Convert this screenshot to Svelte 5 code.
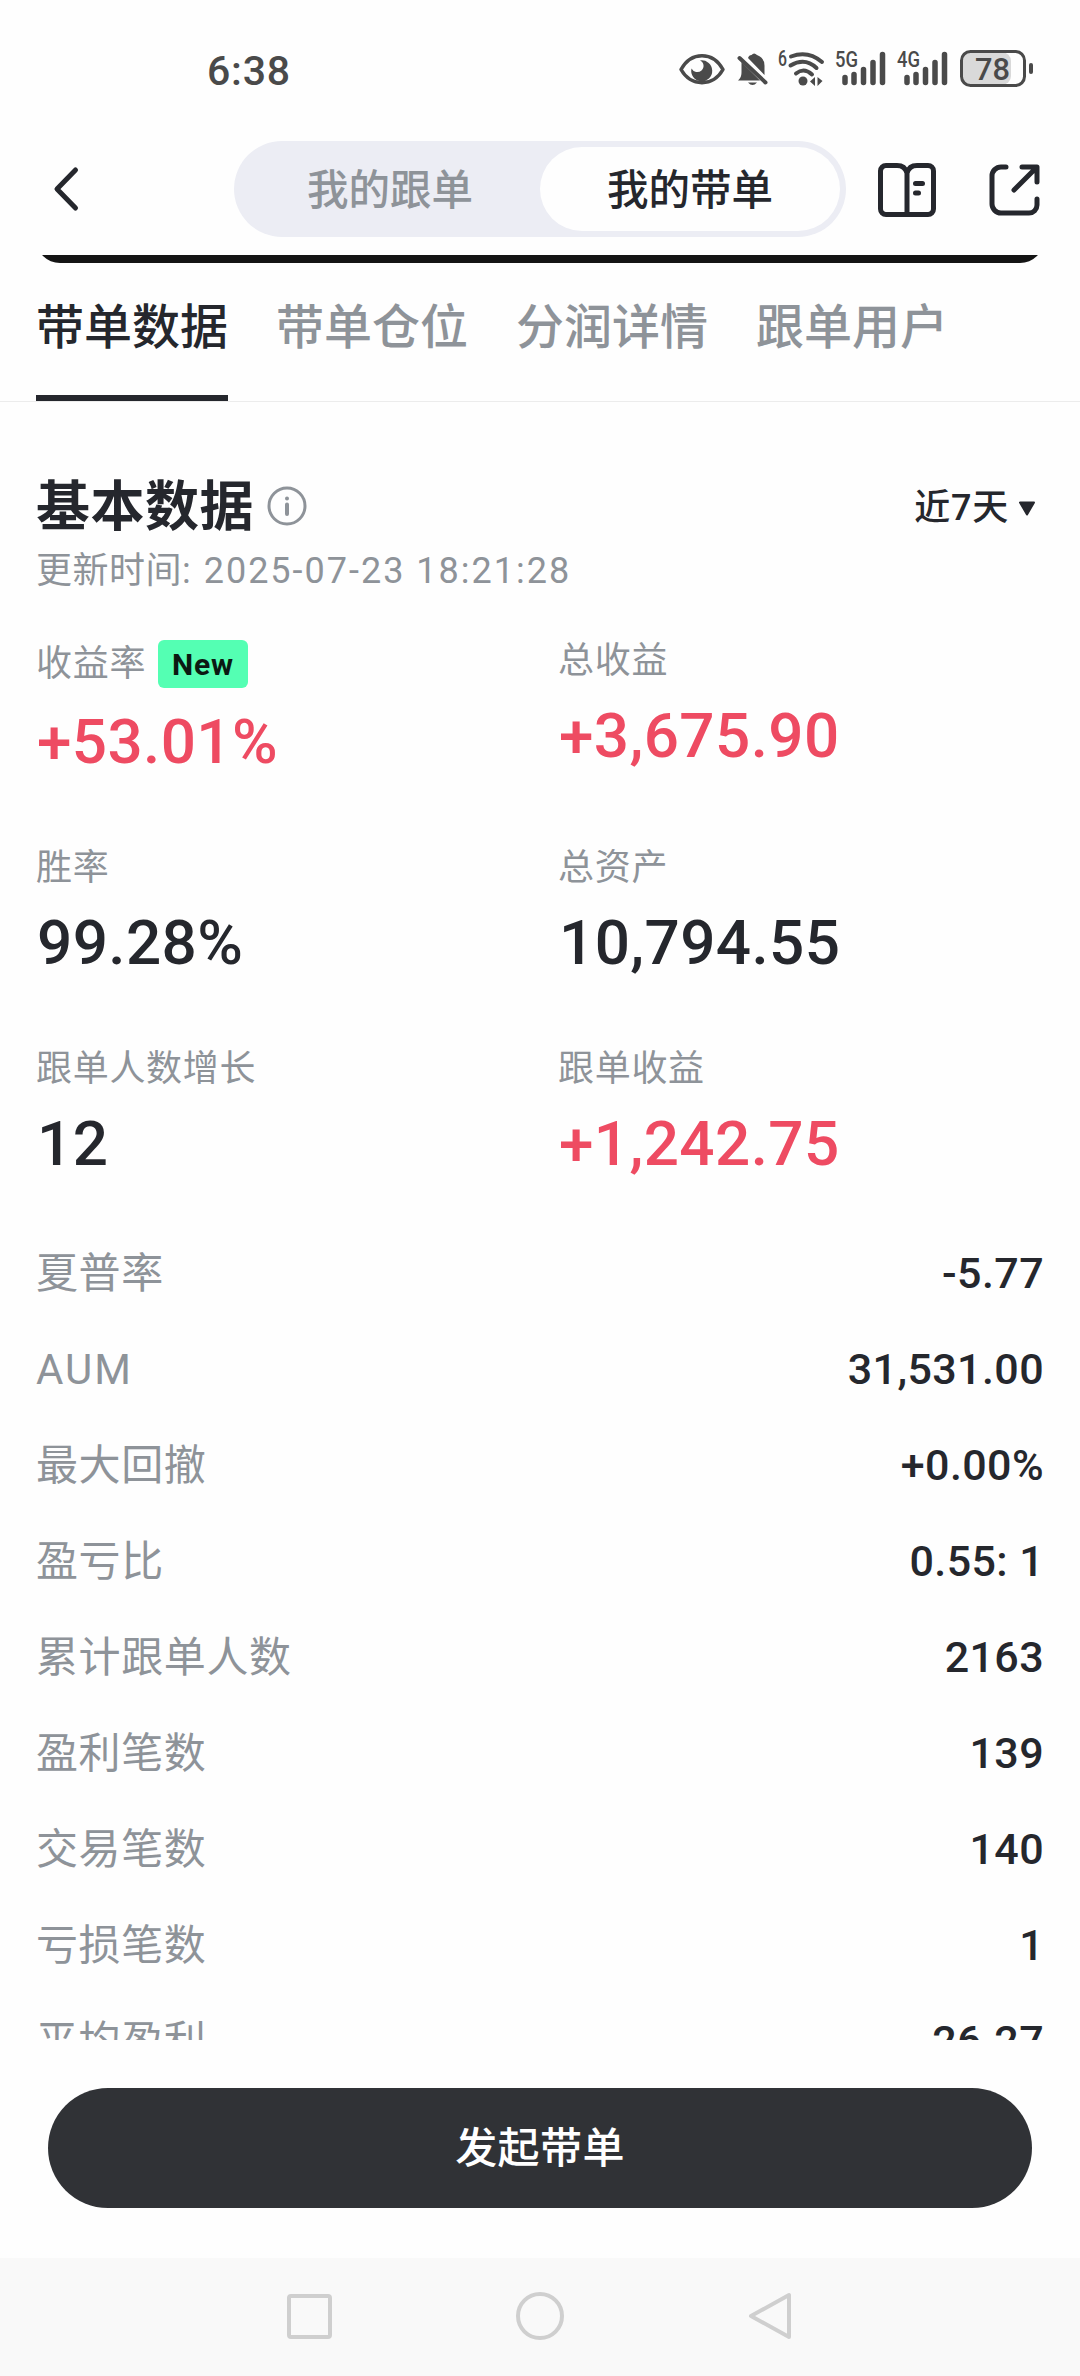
<script lang="ts">
  interface Metric {
    label: string;
    value: string;
    up?: boolean;
    badge?: string;
  }

  const modes = ["我的跟单", "我的带单"];
  const tabs = ["带单数据", "带单仓位", "分润详情", "跟单用户"];

  let mode = $state(1);
  let tab = $state(0);

  const metrics: Metric[] = [
    { label: "收益率", value: "+53.01%", up: true, badge: "New" },
    { label: "总收益", value: "+3,675.90", up: true },
    { label: "胜率", value: "99.28%" },
    { label: "总资产", value: "10,794.55" },
    { label: "跟单人数增长", value: "12" },
    { label: "跟单收益", value: "+1,242.75", up: true },
  ];

  const rows = [
    ["夏普率", "-5.77"],
    ["AUM", "31,531.00"],
    ["最大回撤", "+0.00%"],
    ["盈亏比", "0.55: 1"],
    ["累计跟单人数", "2163"],
    ["盈利笔数", "139"],
    ["交易笔数", "140"],
    ["亏损笔数", "1"],
    ["平均盈利", "26.27"],
  ];
</script>

{#snippet signal(label: string)}
  <svg class="signal" width="52" height="38" viewBox="0 0 52 38">
    <text x="0" y="17" textLength="23" lengthAdjust="spacingAndGlyphs">{label}</text>
    <path d="M10 27.500v5M19 24.500v8M28.500 19.500v13M38 12.500v20M47.500 4.500v28" />
  </svg>
{/snippet}

<div class="screen">
  <div class="status">
    <span class="time">6:38</span>
    <div class="status-icons">
      <svg width="46" height="38" viewBox="0 0 46 38">
        <path d="M2 19.500C12 1 34 1 44 19.500C34 37 12 37 2 19.500Z" fill="none" stroke="#4a4a4a" stroke-width="3.500" stroke-linejoin="round" />
        <path d="M21 10.500a10.500 10.500 0 1 1-8.500 8a6.500 6.500 0 0 0 10 2a6 6 0 0 0-1.500-10Z" fill="#4a4a4a" />
      </svg>
      <svg class="bell" width="32" height="38" viewBox="0 0 32 38">
        <path d="M4.500 12L23 30.500H1c3-3 3.500-5 3.500-9zM11 8q1-3 3.500-3q2.500-3 5.500 0q8 3 7.500 12v8z" fill="#4a4a4a" />
        <path d="M11 32.500h9q-4.500 5-9 0z" fill="#4a4a4a" />
        <path d="M2.500 8L28.500 32.500" stroke="#4a4a4a" stroke-width="4" stroke-linecap="round" />
      </svg>
      <svg class="wifi" width="48" height="38" viewBox="0 0 48 38">
        <text x="0" y="16" textLength="9" lengthAdjust="spacingAndGlyphs">6</text>
        <path d="M13 6.500Q30 0 44 12M12.500 15.500Q27 7 38.500 18M18 23.500Q26 17 34 24.500" fill="none" stroke="#4a4a4a" stroke-width="4" stroke-linecap="round" />
        <circle cx="25" cy="31" r="4.500" fill="#4a4a4a" />
        <path d="M37 27v9l-5-4.500zM39.500 27v9l5-5z" fill="#4a4a4a" />
      </svg>
      {@render signal("5G")}
      {@render signal("4G")}
      <svg class="battery" width="74" height="38" viewBox="0 0 74 38">
        <rect x="2" y="2" width="50" height="33" rx="9" fill="#d9d9d9" />
        <rect x="2.500" y="1.500" width="63" height="34" rx="9" fill="none" stroke="#4a4a4a" stroke-width="3" />
        <rect x="70" y="13" width="4" height="11" rx="2" fill="#4a4a4a" />
        <text x="16" y="30" textLength="35" lengthAdjust="spacingAndGlyphs">78</text>
      </svg>
    </div>
  </div>

  <header>
    <button class="back" aria-label="返回">
      <svg width="30" height="46" viewBox="0 0 30 46">
        <path d="M23.500 4L5 23l18.500 19" />
      </svg>
    </button>
    <div class="switch">
      {#each modes as name, i}
        <button class:on={mode === i} onclick={() => (mode = i)}>{name}</button>
      {/each}
    </div>
    <svg class="book" width="58" height="54" viewBox="0 0 58 54">
      <path d="M29 10Q27 2.500 19 2.500H8a5.500 5.500 0 0 0-5.500 5.500V46a5.500 5.500 0 0 0 5.500 5.500H50a5.500 5.500 0 0 0 5.500-5.500V8A5.500 5.500 0 0 0 50 2.500H39Q31 2.500 29 10V51" />
      <path d="M37.500 20.500h7M37.500 30h3" />
    </svg>
    <svg class="share" width="52" height="54" viewBox="0 0 52 54">
      <path d="M17 4H12a9 9 0 0 0-9 9V41a9 9 0 0 0 9 9H40a8 8 0 0 0 8-8V36" />
      <path d="M33 4H48V19M47 5L25 27" />
    </svg>
  </header>

  <div class="peek"><div class="card"></div></div>

  <nav class="tabs">
    {#each tabs as name, i}
      <button class:active={tab === i} onclick={() => (tab = i)}>{name}</button>
    {/each}
  </nav>

  <main>
    <div class="heading">
      <h2>基本数据</h2>
      <svg width="40" height="40" viewBox="0 0 40 40">
        <circle cx="20" cy="20" r="18" />
        <path d="M20 18.500v9.500M20 12.500v.1" />
      </svg>
      <div class="range">
        近7天
        <svg width="18" height="16" viewBox="0 0 18 16"><path d="M2 1.500H16L9 13.500Z" /></svg>
      </div>
    </div>
    <p class="updated">更新时间<span>: 2025-07-23 18:21:28</span></p>

    <div class="metrics">
      {#each metrics as m}
        <div class="metric">
          <div class="label">
            {m.label}
            {#if m.badge}<span class="badge">{m.badge}</span>{/if}
          </div>
          <div class="value" class:up={m.up}>{m.value}</div>
        </div>
      {/each}
    </div>

    <ul>
      {#each rows as [name, value]}
        <li><span class:latin={name === "AUM"}>{name}</span><b>{value}</b></li>
      {/each}
    </ul>
  </main>

  <footer>
    <button class="start">发起带单</button>
  </footer>

  <div class="system-nav">
    <svg width="50" height="50" viewBox="0 0 50 50"><rect x="5" y="5" width="41" height="41" rx="2" /></svg>
    <svg width="50" height="50" viewBox="0 0 50 50"><circle cx="25" cy="25" r="22" /></svg>
    <svg width="50" height="50" viewBox="0 0 50 50"><path d="M43 4V46L5 25Z" /></svg>
  </div>
</div>

<style>
  :global(body) {
    margin: 0;
    background: #fefefe;
  }

  .screen {
    display: flex;
    flex-direction: column;
    width: 1080px;
    height: 2376px;
    overflow: hidden;
    background: #fefefe;
    color: #25272d;
    font-family: Roboto, "Noto Sans CJK SC", sans-serif;
  }

  button {
    padding: 0;
    border: 0;
    background: none;
    color: inherit;
    font: inherit;
  }

  svg {
    flex: none;
    display: block;
    overflow: visible;
  }

  .status {
    display: flex;
    align-items: center;
    justify-content: space-between;
    height: 138px;
    padding: 0 47px 0 207px;
    box-sizing: border-box;
    color: #4a4a4a;
  }

  .time {
    padding-top: 4px;
    font-size: 41px;
    font-weight: 500;
    letter-spacing: 0.8px;
  }

  .status-icons {
    display: flex;
    align-items: center;
  }

  .status-icons text {
    fill: #4a4a4a;
    font-size: 22px;
    font-weight: 500;
  }

  .bell {
    margin-left: 12px;
  }

  .wifi {
    margin: 0 9px;
  }

  .signal {
    margin-right: 10px;
  }

  .signal path {
    stroke: #4a4a4a;
    stroke-width: 5.500;
    stroke-linecap: round;
  }

  .status-icons .battery text {
    font-size: 32px;
  }

  header {
    display: flex;
    align-items: center;
    height: 102px;
    margin-bottom: 15px;
    padding-left: 52px;
  }

  .back {
    width: 182px;
  }

  header path {
    fill: none;
    stroke: #25272d;
    stroke-width: 5;
    stroke-linecap: round;
    stroke-linejoin: round;
  }

  .switch {
    display: flex;
    width: 600px;
    height: 84px;
    padding: 6px;
    border-radius: 48px;
    background: #ecedf4;
  }

  .switch button {
    flex: 1;
    padding-bottom: 4px;
    border-radius: 42px;
    color: #8e9399;
    font-size: 41.500px;
    font-weight: 500;
  }

  .switch .on {
    background: #fefefe;
    color: #25272d;
  }

  .book {
    margin: 2px 0 0 32px;
  }

  .share {
    margin: 2px 0 0 53px;
  }

  .peek {
    display: flex;
    align-items: flex-end;
    height: 8px;
    padding: 0 36px;
    overflow: hidden;
  }

  .card {
    flex: 1;
    height: 60px;
    border-radius: 24px;
    background: #141414;
  }

  .tabs {
    display: flex;
    gap: 48px;
    height: 138px;
    padding: 0 36px;
    border-bottom: 1px solid #ececec;
  }

  .tabs button {
    padding-bottom: 12px;
    border-bottom: 6px solid transparent;
    color: #8e9399;
    font-size: 48px;
    font-weight: 500;
  }

  .tabs .active {
    border-color: #25272d;
    color: #25272d;
  }

  main {
    height: 1638px;
    padding: 0 36px;
    overflow: hidden;
  }

  .heading {
    display: flex;
    align-items: center;
    height: 60px;
    margin-top: 74px;
  }

  h2 {
    margin: 3px 13px 0 0;
    font-size: 54px;
    line-height: 60px;
    letter-spacing: 0.5px;
  }

  .heading > svg {
    fill: none;
    stroke: #8e9399;
    stroke-width: 3;
    stroke-linecap: round;
  }

  .heading > svg path {
    stroke-width: 4;
  }

  .range {
    display: flex;
    align-items: center;
    margin-left: auto;
    padding: 0 8px 5px 0;
    font-size: 36px;
    font-weight: 500;
    letter-spacing: 0.8px;
  }

  .range svg {
    margin: 10px 0 0 9px;
    fill: #25272d;
    stroke: #25272d;
    stroke-width: 2;
    stroke-linejoin: round;
  }

  .updated {
    margin: 14px 0 46px;
    color: #8e9399;
    font-size: 36px;
    line-height: 42px;
    letter-spacing: 0.5px;
  }

  .updated span {
    letter-spacing: 2px;
  }

  .metrics {
    display: grid;
    grid-template-columns: 1fr 1fr;
    gap: 69px 36px;
  }

  .label {
    display: flex;
    align-items: center;
    height: 38px;
    margin-bottom: 21px;
    padding-bottom: 4px;
    color: #8e9399;
    font-size: 36px;
    letter-spacing: 0.7px;
  }

  .label:has(.badge) {
    height: 44px;
  }

  .badge {
    height: 48px;
    margin: 8px 0 0 12px;
    padding: 0 14px;
    border-radius: 6px;
    background: #54ffb3;
    color: #0b1a12;
    font-size: 30px;
    font-weight: 700;
    line-height: 49px;
  }

  .value {
    padding-left: 1px;
    font-size: 62px;
    font-weight: 500;
    line-height: 69px;
    letter-spacing: 0.4px;
  }

  .up {
    color: #ee4b62;
  }

  ul {
    margin: 46px 0 0;
    padding: 0;
    list-style: none;
  }

  li {
    display: flex;
    align-items: center;
    justify-content: space-between;
    height: 96px;
    color: #8e9399;
    font-size: 42px;
    letter-spacing: 0.6px;
  }

  li span {
    padding-bottom: 5px;
  }

  li .latin {
    padding: 2px 0 0;
    letter-spacing: 2px;
  }

  li b {
    padding-top: 2px;
    color: #25272d;
    font-size: 43px;
    font-weight: 500;
    letter-spacing: 0.4px;
  }

  footer {
    height: 218px;
    padding: 48px 48px 0;
    box-sizing: border-box;
  }

  .start {
    width: 100%;
    height: 120px;
    padding-bottom: 7px;
    border-radius: 60px;
    background: #303236;
    color: #fff;
    font-size: 42px;
    font-weight: 500;
    letter-spacing: 0.4px;
  }

  .system-nav {
    flex: 1;
    display: flex;
    justify-content: center;
    gap: 181px;
    padding-top: 33px;
    background: #f9f9f9;
  }

  .system-nav svg {
    fill: none;
    stroke: #cfcfcf;
    stroke-width: 4;
    stroke-linejoin: round;
  }
</style>
